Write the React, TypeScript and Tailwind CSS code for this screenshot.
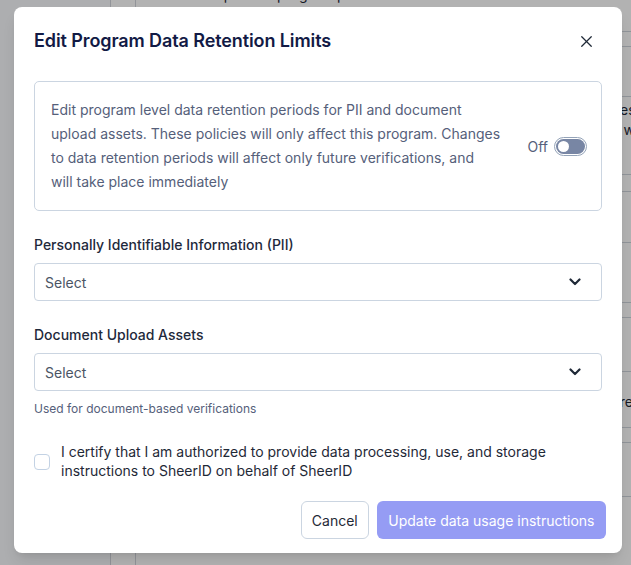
import { X } from 'lucide-react'

const font = { fontFamily: 'Inter, "Noto Sans", sans-serif' }

function Chevron() {
  return (
    <svg width="12" height="8" viewBox="0 0 12 8" fill="none" className="text-[#1f2937]">
      <path d="M1.5 1.5 6 6l4.5-4.5" stroke="currentColor" strokeWidth="2.2" strokeLinecap="round" strokeLinejoin="round" />
    </svg>
  )
}

function SelectBox() {
  return (
    <div className="flex h-[38px] items-center justify-between rounded-[4px] border border-[#cbd5e1] bg-white pl-[10px] pr-[20px]">
      <span className="text-[14px] text-[#4b5565]">Select</span>
      <Chevron />
    </div>
  )
}

// rows of the page that sits under the dimmed overlay
const rows = [
  'h-[32px]',
  'h-[15px]',
  'h-[50px]',
  'h-[78px]',
  'h-[17px]',
  'h-[51px]',
  'h-[60px]',
  'h-[15px]',
  'h-[54px]',
  'h-[56px]',
  'h-[15px]',
  'h-[54px]',
]

export default function App() {
  return (
    <div className="relative h-[565px] w-[631px] overflow-hidden bg-white" style={font}>
      {/* page behind the modal */}
      <div className="flex h-full">
        <div className="w-[111px] border-r border-[#d1d5db] bg-[#f8fafc]" />
        <div className="w-[25px] border-r border-[#d1d5db]" />
        <div className="flex flex-1 flex-col">
          {rows.map((h, i) => (
            <div key={i} className={`${h} border-b border-[#cfd4db] pl-3 text-[14px] leading-5 text-[#1f2937]`}>
              {i === 0 && <div className="-mt-[15px] pl-[20px]">an example of a program placeholder</div>}
              {i === 3 && (
                <div className="pt-[3px] text-right whitespace-nowrap">
                  <div className="-mr-[12px]">… retention periods for this program access</div>
                  <div className="-mr-[4px]">and w</div>
                </div>
              )}
              {i === 9 && <div className="pt-[20px] text-right whitespace-nowrap -mr-[2px]">… complete for the consumer here</div>}
            </div>
          ))}
          <div className="flex-1 pt-[28px] text-[15px] text-[#1f2937]">
            Add a CTA to direct the consumer after successful verification.
          </div>
        </div>
      </div>

      {/* overlay + modal */}
      <div className="absolute inset-0 bg-black/30 pt-[7px] pl-[14px]">
        <div className="w-[608px] rounded-[8px] bg-white px-5 pt-5 pb-[14px] shadow-lg">
          <div className="flex items-center justify-between">
            <h2 className="text-[18px] font-semibold leading-7 tracking-[-0.1px] text-[#121a45]">
              Edit Program Data Retention Limits
            </h2>
            <button className="mr-[6px] text-[#1f2937]" aria-label="Close">
              <X size={19} strokeWidth={1.6} />
            </button>
          </div>

          <div className="mt-[26px] flex items-center rounded-[5px] border border-[#cbd5e1] py-4 pl-4 pr-[14px]">
            <p className="w-[460px] text-[14px] leading-6 text-[#55607a]">
              Edit program level data retention periods for PII and document
              <br />
              upload assets. These policies will only affect this program. Changes
              <br />
              to data retention periods will affect only future verifications, and
              <br />
              will take place immediately
            </p>
            <div className="ml-auto flex items-center gap-[6px]">
              <span className="text-[14px] text-[#55607a]">Off</span>
              <div className="flex h-[19px] w-[33px] items-center rounded-full border border-[#94a3b8] bg-white p-[1px]">
                <div className="flex h-full w-full items-center rounded-full bg-[#7886a4] pl-[2px]">
                  <div className="h-[11px] w-[11px] rounded-full bg-white" />
                </div>
              </div>
            </div>
          </div>

          <div className="mt-6">
            <label className="mb-2 block text-[14px] font-medium leading-5 text-[#1e293b]">
              Personally Identifiable Information (PII)
            </label>
            <SelectBox />
          </div>

          <div className="mt-6">
            <label className="mb-2 block text-[14px] font-medium leading-5 text-[#1e293b]">
              Document Upload Assets
            </label>
            <SelectBox />
            <p className="mt-[10px] text-[12px] leading-4 text-[#55607a]">Used for document-based verifications</p>
          </div>

          <div className="mt-[25px] flex items-start gap-[11px]">
            <div className="mt-[12px] h-4 w-4 shrink-0 rounded-[4px] border border-[#c3d2e4] bg-white" />
            <p className="text-[14px] leading-[19px] text-[#1f2937]">
              I certify that I am authorized to provide data processing, use, and storage instructions to SheerID on behalf of SheerID
            </p>
          </div>

          <div className="mt-[21px] -mr-[4px] flex justify-end gap-2">
            <button className="h-[38px] rounded-[6px] border border-[#cbd5e1] bg-white px-[10px] text-[14px] text-[#1f2937]">
              Cancel
            </button>
            <button className="h-[38px] rounded-[6px] bg-[#959cf4] px-[11.5px] text-[14px] text-white">
              Update data usage instructions
            </button>
          </div>
        </div>
      </div>
    </div>
  )
}
